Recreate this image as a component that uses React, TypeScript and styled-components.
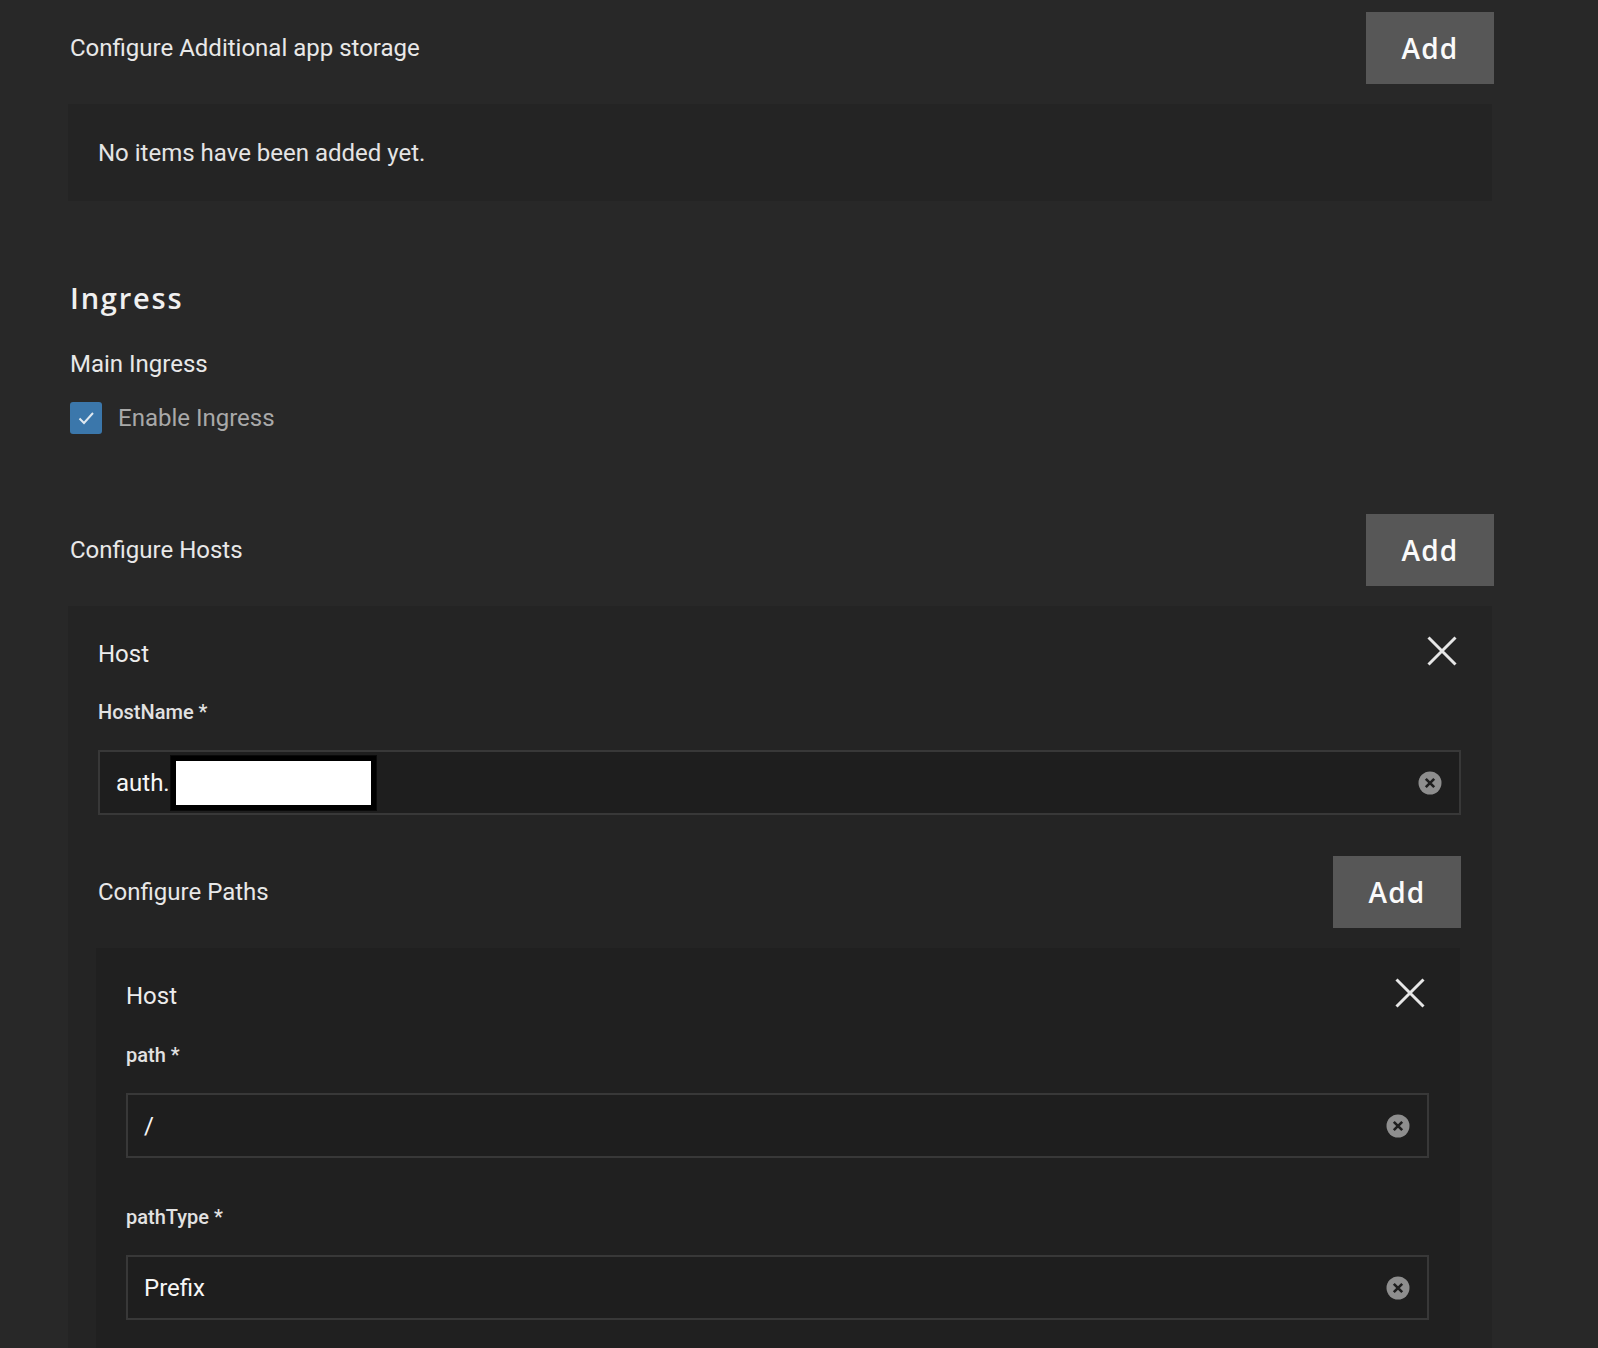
import React from 'react';
import styled, { createGlobalStyle } from 'styled-components';

const GlobalStyle = createGlobalStyle`
  html, body {
    margin: 0;
    padding: 0;
    background: #282828;
    overflow: hidden;
  }
  body {
    font-family: Roboto, "Liberation Sans", sans-serif;
    color: #e6e6e6;
  }
  * {
    box-sizing: border-box;
  }
`;

const Page = styled.div`
  padding: 12px 104px 0 68px;
  min-height: 1348px;
`;

const SectionHeader = styled.div<{ $mt?: number }>`
  display: flex;
  justify-content: space-between;
  align-items: center;
  margin-top: ${p => p.$mt ?? 0}px;
`;

const SectionTitle = styled.span<{ $inset?: boolean }>`
  font-size: 24px;
  line-height: 28px;
  color: #e8e8e8;
  padding-left: ${p => (p.$inset ? 0 : 2)}px;
`;

const AddButton = styled.button`
  width: 128px;
  height: 72px;
  border: none;
  background: #575757;
  color: #fafafa;
  font-family: "Open Sans", "DejaVu Sans", sans-serif;
  font-weight: 600;
  font-size: 28px;
  letter-spacing: 1.2px;
  cursor: pointer;
`;

const ListPanel = styled.div<{ $tone: 'light' | 'dark'; $empty?: boolean }>`
  margin-top: 20px;
  margin-right: ${p => (p.$tone === 'light' ? '2px' : '1px')};
  margin-left: ${p => (p.$tone === 'light' ? '0' : '-2px')};
  background: ${p => (p.$tone === 'light' ? '#242424' : '#202020')};
  padding: ${p => (p.$empty ? '0 30px' : '27px 31px 40px 30px')};
  ${p =>
    p.$empty &&
    `
    height: 97px;
    display: flex;
    align-items: center;
  `}
`;

const EmptyText = styled.span`
  font-size: 24px;
  color: #e4e4e4;
`;

const Heading = styled.h2`
  margin: 79px 0 0 2px;
  font-family: "Open Sans", "DejaVu Sans", sans-serif;
  font-weight: 600;
  font-size: 29px;
  line-height: 36px;
  letter-spacing: 1.8px;
  color: #f0f0f0;
`;

const SubHeading = styled.div`
  margin: 34px 0 0 2px;
  font-size: 24px;
  line-height: 28px;
  color: #e8e8e8;
`;

const CheckRow = styled.label`
  display: flex;
  align-items: center;
  gap: 16px;
  margin: 24px 0 0 2px;
  height: 32px;
`;

const CheckBox = styled.span`
  width: 32px;
  height: 32px;
  border-radius: 3px;
  background: #3b77ab;
  display: flex;
  align-items: center;
  justify-content: center;
`;

const CheckLabel = styled.span`
  font-size: 24px;
  color: #a9a9a9;
`;

const ItemHeader = styled.div`
  display: flex;
  justify-content: space-between;
  align-items: center;
  height: 36px;
`;

const ItemTitle = styled.span`
  font-size: 24px;
  line-height: 28px;
  color: #ececec;
  padding-top: 5px;
`;

const CloseButton = styled.button`
  width: 36px;
  height: 36px;
  margin-right: 1px;
  padding: 0;
  border: none;
  background: transparent;
  display: flex;
  align-items: center;
  justify-content: center;
  cursor: pointer;
`;

const Field = styled.div<{ $mt: number }>`
  margin-top: ${p => p.$mt}px;
`;

const FieldLabel = styled.div`
  font-size: 20px;
  font-weight: 500;
  line-height: 24px;
  color: #e2e2e2;
`;

const InputBox = styled.div`
  margin-top: 26px;
  height: 65px;
  display: flex;
  align-items: center;
  padding: 0 17px 0 16px;
  border: 2px solid #383838;
  background: #1e1e1e;
`;

const InputValue = styled.span`
  font-size: 24px;
  font-weight: 400;
  color: #f6f6f6;
  display: flex;
  align-items: center;
`;

const Redacted = styled.span`
  display: inline-block;
  width: 205px;
  height: 54px;
  margin-left: 1px;
  background: #ffffff;
  border: 5px solid #000000;
  outline: 1px solid #0a0a0a;
`;

const ClearButton = styled.button`
  margin-left: auto;
  width: 24px;
  height: 24px;
  padding: 0;
  border: none;
  background: transparent;
  display: flex;
  cursor: pointer;
`;

const CloseIcon = () => (
  <svg width="36" height="36" viewBox="0 0 36 36">
    <path d="M4.5 4.5 L31.5 31.5 M31.5 4.5 L4.5 31.5" stroke="#e6e6e6" strokeWidth="3" />
  </svg>
);

const ClearIcon = () => (
  <svg width="24" height="24" viewBox="0 0 24 24">
    <circle cx="12" cy="12" r="11.5" fill="#8e8e8e" />
    <path d="M7.8 7.8 L16.2 16.2 M16.2 7.8 L7.8 16.2" stroke="#1e1e1e" strokeWidth="2.6" />
  </svg>
);

const CheckIcon = () => (
  <svg width="20" height="20" viewBox="0 0 20 20">
    <path d="M3.5 10.5 L8 15 L17 5" fill="none" stroke="#dfe8f0" strokeWidth="2" />
  </svg>
);

interface TextFieldProps {
  label: string;
  mt: number;
  children: React.ReactNode;
}

const TextField: React.FC<TextFieldProps> = ({ label, mt, children }) => (
  <Field $mt={mt}>
    <FieldLabel>{label}</FieldLabel>
    <InputBox>
      <InputValue>{children}</InputValue>
      <ClearButton aria-label="Clear">
        <ClearIcon />
      </ClearButton>
    </InputBox>
  </Field>
);

const App: React.FC = () => {
  return (
    <>
      <GlobalStyle />
      <Page>
        <SectionHeader>
          <SectionTitle>Configure Additional app storage</SectionTitle>
          <AddButton>Add</AddButton>
        </SectionHeader>
        <ListPanel $tone="light" $empty>
          <EmptyText>No items have been added yet.</EmptyText>
        </ListPanel>

        <Heading>Ingress</Heading>
        <SubHeading>Main Ingress</SubHeading>
        <CheckRow>
          <CheckBox>
            <CheckIcon />
          </CheckBox>
          <CheckLabel>Enable Ingress</CheckLabel>
        </CheckRow>

        <SectionHeader $mt={80}>
          <SectionTitle>Configure Hosts</SectionTitle>
          <AddButton>Add</AddButton>
        </SectionHeader>
        <ListPanel $tone="light">
          <ItemHeader>
            <ItemTitle>Host</ItemTitle>
            <CloseButton aria-label="Remove">
              <CloseIcon />
            </CloseButton>
          </ItemHeader>
          <TextField label="HostName *" mt={31}>
            auth.
            <Redacted />
          </TextField>

          <SectionHeader $mt={41}>
            <SectionTitle $inset>Configure Paths</SectionTitle>
            <AddButton>Add</AddButton>
          </SectionHeader>
          <ListPanel $tone="dark">
            <ItemHeader>
              <ItemTitle>Host</ItemTitle>
              <CloseButton aria-label="Remove">
                <CloseIcon />
              </CloseButton>
            </ItemHeader>
            <TextField label="path *" mt={32}>
              /
            </TextField>
            <TextField label="pathType *" mt={47}>
              Prefix
            </TextField>
          </ListPanel>
        </ListPanel>
      </Page>
    </>
  );
};

export default App;
